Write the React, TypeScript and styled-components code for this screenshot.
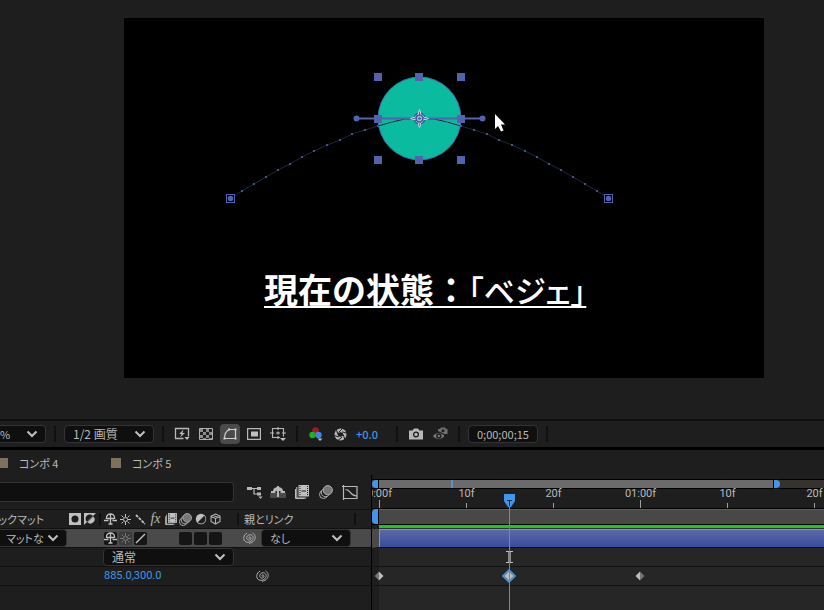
import React from "react";
import styled, { createGlobalStyle } from "styled-components";

const c = {
  panel: "#1e1e1e",
  field: "#0f0f0f",
  edge: "#333333",
  line: "#101010",
  text: "#b9b9b9",
  blue: "#3f96ea",
  path: "#5263ad",
};

const GlobalStyle = createGlobalStyle`
  * { box-sizing: border-box; }
  html, body { margin: 0; background: ${c.panel}; }
  body, button, input, select {
    font-family: "Noto Sans CJK JP", "Noto Sans", sans-serif;
    font-size: 11px;
    line-height: 16px;
    color: ${c.text};
    font-feature-settings: "palt";
  }
  svg { display: block; flex: none; }
`;

const AppFrame = styled.div`
  display: flex;
  flex-direction: column;
  min-height: 100vh;
  overflow: hidden;
`;

/* ---------- composition viewer ---------- */

const Viewer = styled.main`
  padding: 18px 60px 41px 124px;
  border-bottom: 2px solid ${c.line};
`;

const Stage = styled.section`
  position: relative;
  aspect-ratio: 16 / 9;
  background: #000;
  padding: 249px 0 0 140px;
`;

const Overlay = styled.svg`
  position: absolute;
  inset: 0;
  width: 100%;
  height: 100%;
`;

const Caption = styled.h1`
  position: relative;
  margin: 0;
  font-size: 34px;
  font-weight: 700;
  line-height: 44px;
  white-space: nowrap;
  color: #fff;
  font-feature-settings: normal;
  text-decoration: underline;
  text-decoration-thickness: 2px;
  text-underline-offset: 3px;
  text-decoration-skip-ink: none;
`;

const Tight = styled.span`
  font-size: 31px;
  font-weight: 500;
  font-feature-settings: "palt";
`;

/* ---------- shared controls ---------- */

const SelectBox = styled.span<{ $w: number; $flush?: boolean }>`
  display: flex;
  flex: none;
  align-items: center;
  position: relative;
  width: ${(p) => p.$w}px;
  height: 18px;
  border: 1px solid ${c.edge};
  border-left-width: ${(p) => (p.$flush ? 0 : 1)}px;
  border-radius: ${(p) => (p.$flush ? "0 4px 4px 0" : "4px")};
  background: ${c.field};

  svg {
    position: absolute;
    right: 7px;
    pointer-events: none;
  }
`;

const NativeSelect = styled.select<{ $pad: number; $large?: boolean }>`
  appearance: none;
  width: 100%;
  height: 100%;
  border: 0;
  padding: 0 0 0 ${(p) => p.$pad}px;
  background: transparent;
  font-size: ${(p) => (p.$large ? 12 : 11)}px;
  outline-offset: -1px;
`;

const Chevron = () => (
  <svg width="12" height="8" viewBox="0 0 12 8" fill="none" stroke="#c0c0c0" strokeWidth="2">
    <path d="M1.5 1.5 6 6l4.500-4.500" />
  </svg>
);

type DropProps = { label: string; options: string[]; w: number; pad: number; flush?: boolean; large?: boolean };
const Drop = ({ label, options, w, pad, flush, large }: DropProps) => (
  <SelectBox $w={w} $flush={flush}>
    <NativeSelect aria-label={label} $pad={pad} $large={large}>
      {options.map((o) => (
        <option key={o}>{o}</option>
      ))}
    </NativeSelect>
    <Chevron />
  </SelectBox>
);

const IconButton = styled.button<{ $w?: number; $active?: boolean }>`
  display: flex;
  flex: none;
  align-items: center;
  justify-content: center;
  width: ${(p) => p.$w ?? 20}px;
  height: 20px;
  padding: 0;
  border: 0;
  border-radius: 4px;
  background: ${(p) => (p.$active ? "#4a4a4a" : "transparent")};
`;

/* ---------- viewer toolbar ---------- */

const Toolbar = styled.div`
  display: flex;
  align-items: center;
  height: 26px;
  background: ${c.panel};
`;

const Group = styled.div`
  display: flex;
  flex: none;
  align-items: center;
  gap: 4px;
`;

const Divider = styled.span`
  flex: none;
  width: 2px;
  height: 16px;
  margin: 0 8px;
  background: ${c.line};
`;

const Exposure = styled.button`
  width: 34px;
  padding: 0 0 0 2px;
  border: 0;
  background: none;
  text-align: left;
  font-weight: 500;
  color: ${c.blue};
`;

const TimeField = styled.input`
  width: 70px;
  height: 18px;
  padding: 0 8px;
  border: 1px solid ${c.edge};
  border-radius: 4px;
  background: ${c.field};
`;

/* ---------- tabs ---------- */

const Tabs = styled.nav`
  display: flex;
  align-items: center;
  height: 28px;
  border-top: 3px solid #000;
`;

const Tab = styled.button`
  display: flex;
  align-items: center;
  gap: 11px;
  width: 113px;
  padding: 0;
  border: 0;
  background: none;

  &:first-child { margin-left: -2px; }
  &::before {
    content: "";
    width: 10px;
    height: 10px;
    background: #7d705f;
  }
`;

/* ---------- timeline ---------- */

const Timeline = styled.section`
  display: flex;
  flex: 1;
`;

const Outline = styled.div`
  flex: none;
  width: 372px;
  border-right: 1px solid #000;
`;

const SearchRow = styled.div`
  display: flex;
  align-items: center;
  height: 35px;
  border-bottom: 1px solid ${c.line};
`;

const Search = styled.input`
  width: 234px;
  height: 20px;
  margin-right: 8px;
  border: 1px solid ${c.edge};
  border-left: 0;
  border-radius: 0 4px 4px 0;
  background: ${c.field};
`;

const Row = styled.div<{ $lit?: boolean }>`
  display: grid;
  grid-template-columns: 103px 139px 1fr;
  align-items: center;
  height: 19px;
  border-bottom: 1px solid ${c.line};
  background: ${(p) => (p.$lit ? "#4a4a4a" : "transparent")};
`;

const Cell = styled.div<{ $gap?: number }>`
  display: flex;
  align-items: center;
  gap: ${(p) => p.$gap ?? 0}px;
  min-width: 0;
  height: 100%;
`;

const MatteLabel = styled.span`
  display: flex;
  justify-content: flex-end;
  flex: none;
  width: 44px;
  margin-right: 22px;
  white-space: nowrap;
`;

const Notch = styled.span<{ $left?: number }>`
  flex: none;
  width: 2px;
  height: 12px;
  margin-left: ${(p) => p.$left ?? 0}px;
  background: ${c.line};
`;

const ParentLabel = styled.span`
  width: 110px;
  padding-left: 2px;
`;

const Slot = styled.button<{ $box?: boolean; $soft?: boolean }>`
  display: flex;
  align-items: center;
  justify-content: center;
  flex: none;
  width: 13px;
  height: 13px;
  margin: 0 1px;
  padding: 0;
  border: 0;
  border-radius: 2px;
  background: ${(p) => (p.$soft ? "#3a3a3a" : p.$box ? "#151515" : "transparent")};
`;

const Gap = styled.span`
  width: 30px;
`;

const Fx = styled.span`
  font: italic 14px/14px "Liberation Serif", serif;
`;

const Value = styled.button`
  padding: 0 0 0 1px;
  border: 0;
  background: none;
  font-family: "Roboto", sans-serif;
  color: ${c.blue};
`;

const WhipSpace = styled.span`
  width: 13px;
`;

/* ---------- time graph ---------- */

const Graph = styled.div`
  position: relative;
  display: flex;
  flex: 1;
  flex-direction: column;
  min-width: 0;
  padding-top: 4px;
  overflow: hidden;
`;

const Navigator = styled.div`
  display: flex;
  height: 10px;
  border: 1px solid #000;
  border-width: 1px 0;
  background: #36322e;
`;

const Cap = styled.span<{ $end?: boolean }>`
  flex: none;
  width: 7px;
  border-radius: ${(p) => (p.$end ? "0 4px 4px 0" : "4px 0 0 4px")};
  background: ${c.blue};
  border: 0 solid #000;
  border-width: ${(p) => (p.$end ? "0 0 0 1px" : "0 1px 0 0")};
`;

const NavRange = styled.span`
  flex: 394;
  background: #6b6b6b;

  &::before {
    content: "";
    display: block;
    width: 2px;
    height: 100%;
    margin-left: 72px;
    background: #5a8fce;
  }
`;

const NavRest = styled.span`
  flex: 44;
`;

const Ruler = styled.div`
  display: flex;
  height: 20px;
  margin-left: -36px;
  border-bottom: 1px solid #000;
`;

const Mark = styled.span<{ $major?: boolean }>`
  display: flex;
  flex: none;
  flex-direction: column;
  align-items: center;
  justify-content: space-between;
  width: 87px;
  font-family: "Roboto", sans-serif;
  line-height: 10px;

  &::after {
    content: "";
    width: 1px;
    height: ${(p) => (p.$major ? 8 : 5)}px;
    background: #a0a0a0;
  }
`;

const WorkArea = styled.div`
  display: flex;
  height: 16px;
  border-bottom: 1px solid #000;
`;

const WorkBar = styled.span`
  flex: 1;
  border-top: 1px solid #606060;
  background: #484848;
`;

const Cached = styled.div`
  height: 4px;
  margin-left: 7px;
  border-bottom: 1px solid #303030;
  background: #13c922;
`;

const Track = styled.div<{ $lit?: boolean; $fill?: boolean }>`
  position: relative;
  flex: ${(p) => (p.$fill ? "1 0 19px" : "0 0 19px")};
  border-left: 7px solid ${(p) => (p.$lit ? "#4a4a4a" : c.panel)};
  border-bottom: ${(p) => (p.$fill ? 0 : 1)}px solid ${c.line};
  background: #262626;
`;

const Clip = styled.div`
  height: 18px;
  border: 1px solid #8d91a8;
  border-width: 1px 0 0 1px;
  background: linear-gradient(#5b69a8, #3a4c9c);
`;

const Key = styled.svg<{ $x: number }>`
  position: absolute;
  top: 2px;
  left: ${(p) => p.$x - 7}px;
`;

const Playhead = styled.div`
  position: absolute;
  top: 19px;
  bottom: 0;
  left: 132px;
  width: 11px;

  &::after {
    content: "";
    position: absolute;
    top: 12px;
    bottom: 0;
    left: 5px;
    width: 1px;
    background: ${c.blue};
  }
`;

const Beam = styled.svg`
  position: absolute;
  top: 3px;
  left: 127px;
`;

/* ---------- icons ---------- */

const Shy = () => (
  <svg width="13" height="12" viewBox="0 0 13 12" fill="none" stroke="#c0c0c0" strokeWidth="1.300">
    <path d="M2.500 6V4.500a4 3.500 0 0 1 8 0V6M6.500 1v10M3 5.500h7M0 7.500h4.500M8.500 7.500H13M4.500 11h4" />
  </svg>
);

const Sun = ({ color = "#c0c0c0" }) => (
  <svg width="11" height="11" viewBox="0 0 11 11" fill="none" stroke={color} strokeWidth="1">
    <circle cx="5.500" cy="5.500" r="2" />
    <path d="M5.500 0v3M5.500 8v3M0 5.500h3M8 5.500h3M1.500 1.500 3.500 3.500M7.500 7.500l2 2M1.500 9.500l2-2M7.500 3.500l2-2" />
  </svg>
);

const Film = ({ size = 12 }) => (
  <svg width={size} height={size} viewBox="0 0 14 14">
    <path d="M3.500 0H14v11.500H3.500z" fill="#c0c0c0" />
    <path d="M1.800 2v11h9.500M.5 4v9.500h9" fill="none" stroke="#c0c0c0" />
    <path d="M5 1v10M12.500 1v10" stroke="#1e1e1e" strokeDasharray="1 1" />
    <path d="M6.500 6h4.500" stroke="#1e1e1e" />
  </svg>
);

const Blur = ({ size = 13 }) => (
  <svg width={size} height={size} viewBox="0 0 14 14" fill="#1e1e1e" stroke="#b0b0b0">
    <circle cx="4.500" cy="9.500" r="4" />
    <circle cx="6.500" cy="7.500" r="4.200" />
    <circle cx="8.800" cy="5.200" r="4.600" fill="#777" />
  </svg>
);

const Spiral = () => (
  <svg width="13" height="12" viewBox="0 0 13 12" fill="none" stroke="#b0b0b0" strokeWidth="1">
    <path d="M6.500 6.500C5.300 6.300 5.800 4.700 7 4.900c1.600.4 1.200 3-.8 3.200C3.500 8.300 2.800 5 5 3.400c2.500-1.700 5.800.1 5 3.200-.8 3-4.500 4.600-7.200 3.200C-.5 8 .3 2.800 4 1.200M9.500 1c3 1.500 3.500 5 1.600 7.500-1.300 1.700-3 2.500-5 2.800" />
  </svg>
);

const Adjust = () => (
  <svg width="12" height="12" viewBox="0 0 12 12">
    <circle cx="6" cy="6" r="5.200" fill="#c0c0c0" />
    <path d="M9.200 2.800 2.800 9.200a4.400 4.400 0 0 0 6.400-6.400z" fill="#1e1e1e" />
  </svg>
);

const Cube = () => (
  <svg width="11" height="12" viewBox="0 0 11 12" fill="none" stroke="#b0b0b0" strokeWidth="1.100">
    <path d="M5.500 1 10 3v5.500L5.500 11 1 8.500V3zM1 3.500l4.500 2 4.500-2M5.500 5.500V11M3 2.500l5 1.800" />
  </svg>
);

const MatteAlpha = () => (
  <svg width="12" height="12" viewBox="0 0 12 12">
    <path d="M0 0h12v12H0z" fill="#c0c0c0" />
    <circle cx="6" cy="6" r="3.500" fill="#1e1e1e" />
  </svg>
);

const MatteInvert = () => (
  <svg width="12" height="12" viewBox="0 0 12 12">
    <path d="M0 0h12L0 12z" fill="#c0c0c0" />
    <path d="M2.800 8.800A4 4 0 0 1 8.800 2.800z" fill="#1e1e1e" />
    <path d="M9.300 3.500A4 4 0 0 1 3.500 9.300z" fill="#c0c0c0" />
  </svg>
);

const Corner = () => <path d="M10 11h6l-3 3z" fill="#c0c0c0" stroke="none" />;

const FastPreview = () => (
  <svg width="16" height="14" viewBox="0 0 16 14" fill="none" stroke="#b8b8b8" strokeWidth="1.300">
    <path d="M9.500 11.500H1.500v-10h13v8" />
    <path d="M9.500 2.500 5 7h2.500L6 10.500 11 6H8.500z" fill="#b8b8b8" stroke="none" />
    <path d="M10.500 10h5l-2.500 3z" fill="#c0c0c0" stroke="none" />
  </svg>
);

const Checker = () => (
  <svg width="14" height="12" viewBox="0 0 14 12">
    <path d="M.5.500h13v11H.5z" fill="#1e1e1e" stroke="#b0b0b0" />
    <path d="M1 1h3v3H1zM7 1h3v3H7zM4 4h3v3H4zM10 4h3v3h-3zM1 7h3v3H1zM7 7h3v3H7zM4 10h3v1H4zM10 10h3v1h-3z" fill="#8c8c8c" />
  </svg>
);

const MaskShape = () => (
  <svg width="16" height="14" viewBox="0 0 16 14" stroke="#d0d0d0" fill="none" strokeWidth="1.200">
    <path d="M7 2.500h6.500v9h-11C2.500 7.500 3.500 4.500 7 2.500z" />
    <path d="M6 1.500h2v2H6zM12.500 1.500h2v2h-2zM12.500 10.500h2v2h-2zM1.500 10.500h2v2h-2z" fill="#d0d0d0" stroke="none" />
  </svg>
);

const Region = () => (
  <svg width="14" height="12" viewBox="0 0 14 12">
    <path d="M.6.600h12.800v10.800H.6z" fill="none" stroke="#b8b8b8" strokeWidth="1.200" />
    <path d="M4 3.500h7v5H4z" fill="#c0c0c0" />
  </svg>
);

const Guides = () => (
  <svg width="16" height="15" viewBox="0 0 16 15" fill="none" stroke="#b8b8b8" strokeWidth="1.100">
    <path d="M10 10.500H2.500v-9h11v8M0 6h4M6 6h4M12 6h4M8 0v3M8 4.500v3M8 9v3" />
    <Corner />
  </svg>
);

const Channels = () => (
  <svg width="14" height="14" viewBox="0 0 14 14">
    <circle cx="6.500" cy="3.500" r="3.300" fill="#b01414" />
    <circle cx="3.500" cy="8" r="3.200" fill="#14b428" />
    <circle cx="9.500" cy="8" r="3.200" fill="#3f86e8" />
    <path d="M8.500 11.500h5l-2.500 2.500z" fill="#c0c0c0" />
  </svg>
);

const Aperture = () => (
  <svg width="13" height="13" viewBox="0 0 13 13">
    <circle cx="6.500" cy="6.500" r="6" fill="#b8b8b8" />
    <path d="M6.500 4 9 5.200v2.600L6.500 9 4 7.800V5.200z" fill="#1e1e1e" />
    <path d="M4.500 4.500 8.500.5M8 3.800l4.700 1.400M9.300 6.500l1.500 5M8 9.200 3.800 12.500M5 9 .4 7.500M3.800 6.500 2.500 1.800" stroke="#1e1e1e" />
  </svg>
);

const Camera = () => (
  <svg width="14" height="12" viewBox="0 0 14 12">
    <path d="M0 2.500h3.500L5 .5h4l1.500 2H14v9H0z" fill="#b8b8b8" />
    <circle cx="7" cy="6.500" r="2.400" fill="none" stroke="#1e1e1e" strokeWidth="1.300" />
  </svg>
);

const ShowSnapshot = () => (
  <svg width="16" height="14" viewBox="0 0 16 14">
    <path d="M6 2h2l1-1.500h4L14 2h1.500v5H12L6 4z" fill="#707070" />
    <circle cx="11" cy="3.800" r="1.500" fill="#1e1e1e" />
    <path d="M.5 9C3.500 4.500 9.500 4.500 13 9c-3.500 4.500-9.500 4.500-12.500 0z" fill="#7a7a7a" stroke="#1e1e1e" />
    <circle cx="6.800" cy="9" r="2.700" fill="#1e1e1e" />
    <circle cx="6.800" cy="9" r="1.200" fill="#7a7a7a" />
  </svg>
);

const Flowchart = () => (
  <svg width="17" height="14" viewBox="0 0 17 14" fill="none" stroke="#b8b8b8" strokeWidth="1.200">
    <path d="M3 3.500h9M8 3.500V9h4" />
    <path d="M1 2h5v3H1zM11 2h4v3h-4zM11 7.500h4v3h-4z" fill="#b8b8b8" stroke="none" />
    <path d="M12.500 11.500h4L14.500 14z" fill="#b8b8b8" stroke="none" />
  </svg>
);

const HideShy = () => (
  <svg width="17" height="14" viewBox="0 0 17 14">
    <path d="M0 8h16v5H0z" fill="#4a4a4a" />
    <path d="M3 6a5 4 0 0 1 10 0z" fill="#b8b8b8" />
    <path d="M8 1v11M1 7h4.500M10.500 7H15" stroke="#b8b8b8" strokeWidth="2" />
  </svg>
);

const GraphEditor = () => (
  <svg width="17" height="15" viewBox="0 0 17 15" fill="none" stroke="#b8b8b8" strokeWidth="1.200">
    <path d="M1.500 1.500h13.500v12H1.500zM0 1.500h1.500V0M3.500 4.500C9.500 4.500 7 10.500 14.500 11M1.500 13.500V15" />
  </svg>
);

/* ---------- motion path overlay ---------- */

const pathDots: [number, number][] = [
  [118, 173], [130, 166], [142, 159], [154, 152], [166, 146], [178, 139],
  [190, 133], [203, 127], [216, 122], [228, 116], [241, 112], [254, 108], [268, 104], [281, 101],
];
const mirrored = pathDots.map(([x, y]): [number, number] => [591 - x, y]).reverse();
const pathLine = [[106.5, 180.5], ...pathDots, [295.5, 100.5], ...mirrored, [484.5, 180.5]]
  .map((p) => p.join(","))
  .join(" ");
const boxPoints: [number, number][] = [
  [254, 59], [295, 59], [337, 59], [254, 101], [337, 101], [254, 142], [295, 142], [337, 142],
];

const MotionPath = () => (
  <Overlay viewBox="0 0 640 360" aria-hidden="true">
    <circle cx="295.500" cy="100.500" r="41.500" fill="#0abb9f" stroke={c.path} />
    <polyline points={pathLine} fill="none" stroke="#1f2740" />
    {[...pathDots, ...mirrored].map(([x, y]) => (
      <circle key={x} cx={x} cy={y} r="1.100" fill="#4a67a6" />
    ))}
    <path d="M232.500 100.500h126" stroke={c.path} strokeWidth="2" />
    {[232.5, 358.5].map((x) => <circle key={x} cx={x} cy="100.500" r="3" fill={c.path} />)}
    {boxPoints.map(([x, y]) => (
      <rect key={`${x}-${y}`} x={x - 4} y={y - 4} width="8" height="8" fill={c.path} />
    ))}
    {[106.5, 484.5].map((x) => (
      <g key={x}>
        <rect x={x - 4} y="176.500" width="8" height="8" fill="#000" stroke={c.path} />
        <circle cx={x} cy="180.500" r="2.800" fill={c.path} />
      </g>
    ))}
    <circle cx="295.500" cy="100.500" r="4.500" fill="none" stroke="#3f5590" strokeWidth="3" />
    <g fill="none" stroke="#c9cae0">
      <circle cx="295.500" cy="100.500" r="4.500" strokeDasharray="2 1" />
      <circle cx="295.500" cy="100.500" r="2" />
      <path d="M294.500 96v-2l1-2.500 1 2.500v2M294.500 105v2l1 2.500 1-2.500v-2M291 99.500h-2l-2.500 1 2.500 1h2M300 99.500h2l2.500 1-2.500 1h-2" />
    </g>
    <path d="M371 96v15l3-3 3 5.500 2.500-1-2.500-6h4z" fill="#fff" />
  </Overlay>
);

const Diamond = ({ x, selected, dim }: { x: number; selected?: boolean; dim?: "left" | "right" }) => (
  <Key $x={x} width="14" height="14" viewBox="0 0 14 14">
    {selected && <path d="M7 .8 13.200 7 7 13.200.8 7z" fill="#706f6b" stroke={c.blue} strokeWidth="1.400" />}
    <path d="M7 2.500 2.500 7 7 11.500z" fill={dim === "left" ? "#77756f" : "#bdbdbd"} />
    <path d="M7 2.500 11.500 7 7 11.500z" fill={dim === "right" ? "#77756f" : "#bdbdbd"} />
  </Key>
);

const toolIcons: [string, React.ReactNode][] = [
  ["高速プレビュー", <FastPreview />],
  ["透明グリッド", <Checker />],
  ["マスクとシェイプのパス", <MaskShape />],
  ["目標範囲", <Region />],
  ["グリッドとガイド", <Guides />],
];

const switchIcons: [string, React.ReactNode][] = [
  ["シャイ", <Shy />],
  ["コラップス", <Sun />],
  ["画質", <svg width="11" height="11" viewBox="0 0 11 11"><path d="m1 1 9 9" stroke="#c0c0c0" strokeWidth="1.800" strokeDasharray="3 1" /></svg>],
  ["エフェクト", <Fx>fx</Fx>],
  ["フレームブレンド", <Film />],
  ["モーションブラー", <Blur />],
  ["調整レイヤー", <Adjust />],
  ["3D レイヤー", <Cube />],
];

const timelineIcons: [string, React.ReactNode][] = [
  ["ミニフローチャート", <Flowchart />],
  ["シャイを隠す", <HideShy />],
  ["フレームブレンド", <Film size={14} />],
  ["モーションブラー", <Blur size={14} />],
  ["グラフエディター", <GraphEditor />],
];

const marks = ["0:00f", "10f", "20f", "01:00f", "10f", "20f"];

export default function App() {
  return (
    <AppFrame>
      <GlobalStyle />
      <Viewer>
        <Stage>
          <MotionPath />
          <Caption>現在の状態：<Tight>「ベジェ」</Tight></Caption>
        </Stage>
      </Viewer>

      <Toolbar>
        <Drop label="拡大率" options={["%"]} w={46} pad={0} flush />
        <Divider />
        <Drop label="解像度" options={["1/2 画質"]} w={90} pad={8} large />
        <Divider />
        <Group>
          {toolIcons.map(([name, icon], i) => (
            <IconButton key={name} aria-label={name} $active={i === 2}>{icon}</IconButton>
          ))}
        </Group>
        <Divider />
        <Group>
          <IconButton aria-label="チャンネル"><Channels /></IconButton>
          <IconButton aria-label="露出をリセット"><Aperture /></IconButton>
          <Exposure>+0.0</Exposure>
        </Group>
        <Divider />
        <Group>
          <IconButton aria-label="スナップショット"><Camera /></IconButton>
          <IconButton aria-label="スナップショットを表示"><ShowSnapshot /></IconButton>
        </Group>
        <Divider />
        <TimeField aria-label="現在の時間" defaultValue="0;00;00;15" />
        <Divider />
      </Toolbar>

      <Tabs>
        <Tab>コンポ 4</Tab>
        <Tab>コンポ 5</Tab>
      </Tabs>

      <Timeline>
        <Outline>
          <SearchRow>
            <Search aria-label="検索" type="search" />
            {timelineIcons.map(([name, icon]) => (
              <IconButton key={name} aria-label={name} $w={24}>{icon}</IconButton>
            ))}
          </SearchRow>
          <Row>
            <Cell $gap={3}>
              <MatteLabel>ラックマット</MatteLabel>
              <MatteAlpha />
              <MatteInvert />
              <Notch />
            </Cell>
            <Cell>
              {switchIcons.map(([name, icon]) => (
                <Slot key={name} aria-label={name}>{icon}</Slot>
              ))}
              <Notch $left={14} />
            </Cell>
            <Cell>
              <ParentLabel>親とリンク</ParentLabel>
              <Notch $left={2} />
            </Cell>
          </Row>
          <Row $lit>
            <Cell>
              <Drop label="トラックマット" options={["マットな"]} w={67} pad={6} flush />
            </Cell>
            <Cell>
              <Slot $box aria-label="シャイ"><Shy /></Slot>
              <Slot $soft aria-label="コラップス"><Sun color="#777" /></Slot>
              <Slot $box aria-label="画質">
                <svg width="11" height="11" viewBox="0 0 11 11"><path d="m1 10 9-9" stroke="#c0c0c0" strokeWidth="1.400" /></svg>
              </Slot>
              <Gap />
              <Slot $box aria-label="モーションブラー" />
              <Slot $box aria-label="調整レイヤー" />
              <Slot $box aria-label="3D レイヤー" />
            </Cell>
            <Cell $gap={4}>
              <Slot aria-label="ピックウイップ"><Spiral /></Slot>
              <Drop label="親とリンク" options={["なし"]} w={90} pad={8} />
            </Cell>
          </Row>
          <Row>
            <Cell />
            <Cell><Drop label="描画モード" options={["通常"]} w={131} pad={8} large /></Cell>
            <Cell />
          </Row>
          <Row>
            <Cell />
            <Cell><Value>885.0,300.0</Value></Cell>
            <Cell>
              <WhipSpace />
              <Slot aria-label="プロパティピックウイップ"><Spiral /></Slot>
            </Cell>
          </Row>
        </Outline>

        <Graph>
          <Navigator>
            <Cap />
            <NavRange />
            <Cap $end />
            <NavRest />
          </Navigator>
          <Ruler>
            {marks.map((m, i) => (
              <Mark key={i} $major={i % 3 === 0}>{m}</Mark>
            ))}
          </Ruler>
          <WorkArea>
            <Cap />
            <WorkBar />
          </WorkArea>
          <Cached />
          <Track $lit><Clip /></Track>
          <Track>
            <Beam width="7" height="12" viewBox="0 0 7 12" fill="none" stroke="#c0c0c0">
              <path d="M0 .5h7M0 11.500h7" />
              <path d="M3.500 1v10" strokeWidth="3" stroke="#8a8a8a" />
            </Beam>
          </Track>
          <Track>
            <Diamond x={0} dim="left" />
            <Diamond x={130} selected />
            <Diamond x={261} dim="right" />
          </Track>
          <Track $fill />
          <Playhead>
            <svg width="11" height="14" viewBox="0 0 11 14">
              <path d="M0 0h11v7L7 13H4L0 7z" fill={c.blue} />
              <path d="M3 6.500h5M5.500 6.500V13" stroke="#183350" />
            </svg>
          </Playhead>
        </Graph>
      </Timeline>
    </AppFrame>
  );
}
